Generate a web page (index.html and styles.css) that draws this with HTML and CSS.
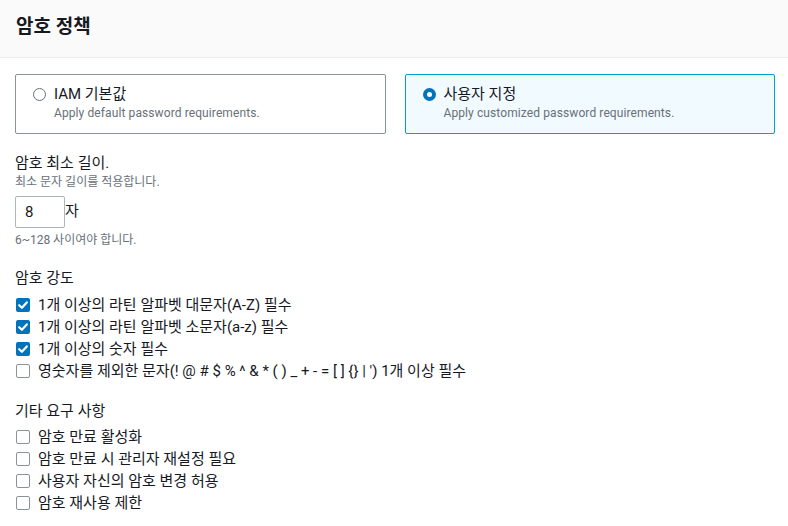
FILE: index.html
```html
<!DOCTYPE html>
<html lang="ko">
<head>
<meta charset="utf-8">
<link rel="stylesheet" href="styles.css">
</head>
<body>
<header class="header"><h2 class="title">암호 정책</h2></header>
<main class="content">
  <div class="tiles">
    <label class="tile">
      <span class="radio"></span>
      <span class="tile-text">
        <span class="tile-label">IAM 기본값</span>
        <span class="tile-desc">Apply default password requirements.</span>
      </span>
    </label>
    <label class="tile tile-selected">
      <span class="radio radio-on"></span>
      <span class="tile-text">
        <span class="tile-label">사용자 지정</span>
        <span class="tile-desc">Apply customized password requirements.</span>
      </span>
    </label>
  </div>

  <div class="field first-field">
    <div class="field-label">암호 최소 길이.</div>
    <div class="field-desc">최소 문자 길이를 적용합니다.</div>
    <div class="input-row"><span class="input">8</span><span class="unit">자</span></div>
    <div class="field-hint">6~128 사이여야 합니다.</div>
  </div>

  <div class="field strength">
    <div class="field-label">암호 강도</div>
    <ul class="checks">
      <li class="check"><span class="box box-on"><svg viewBox="0 0 14 14" width="14" height="14"><path d="M3.2 7.2 L5.9 9.8 L10.8 4.4" fill="none" stroke="#fff" stroke-width="2.2" stroke-linecap="round" stroke-linejoin="round"/></svg></span>1개 이상의 라틴 알파벳 대문자(A-Z) 필수</li>
      <li class="check"><span class="box box-on"><svg viewBox="0 0 14 14" width="14" height="14"><path d="M3.2 7.2 L5.9 9.8 L10.8 4.4" fill="none" stroke="#fff" stroke-width="2.2" stroke-linecap="round" stroke-linejoin="round"/></svg></span>1개 이상의 라틴 알파벳 소문자(a-z) 필수</li>
      <li class="check"><span class="box box-on"><svg viewBox="0 0 14 14" width="14" height="14"><path d="M3.2 7.2 L5.9 9.8 L10.8 4.4" fill="none" stroke="#fff" stroke-width="2.2" stroke-linecap="round" stroke-linejoin="round"/></svg></span>1개 이상의 숫자 필수</li>
      <li class="check"><span class="box"></span>영숫자를 제외한 문자(! @ # $ % ^ &amp; * ( ) _ + - = [ ] {} | ') 1개 이상 필수</li>
    </ul>
  </div>

  <div class="field other">
    <div class="field-label">기타 요구 사항</div>
    <ul class="checks checks-other">
      <li class="check"><span class="box"></span>암호 만료 활성화</li>
      <li class="check"><span class="box"></span>암호 만료 시 관리자 재설정 필요</li>
      <li class="check"><span class="box"></span>사용자 자신의 암호 변경 허용</li>
      <li class="check"><span class="box"></span>암호 재사용 제한</li>
    </ul>
  </div>
</main>
</body>
</html>
```

FILE: styles.css
```css
* { box-sizing: border-box; }
body {
  margin: 0;
  background: #fff;
  color: #16191f;
  font-family: Roboto, "Noto Sans CJK KR", sans-serif;
  font-size: 15px;
  line-height: 20px;
}
.header {
  height: 58px;
  background: #fafafa;
  border-bottom: 1px solid #eaeded;
  padding: 0 16px;
  display: flex;
  align-items: center;
}
.title {
  margin: 0 0 4px 0;
  font-size: 19px;
  line-height: 24px;
  font-weight: 700;
  color: #16191f;
}
.content {
  padding: 16px 13px 0 15px;
}
.tiles {
  display: grid;
  grid-template-columns: 1fr 1fr;
  gap: 19px;
}
.tile {
  display: flex;
  align-items: flex-start;
  gap: 8px;
  height: 60px;
  border: 1px solid #879596;
  border-radius: 2px;
  padding: 9px 16px 0 17px;
  background: #fff;
}
.tile-selected {
  border-color: #00a1c9;
  background: #f1faff;
}
.radio {
  flex: none;
  width: 13px;
  height: 13px;
  margin-top: 4px;
  border: 1px solid #687078;
  border-radius: 50%;
  background: #fff;
}
.radio-on {
  border: 4px solid #0073bb;
}
.tile-text {
  display: flex;
  flex-direction: column;
}
.tile-label {
  font-size: 15px;
  line-height: 20px;
}
.tile-desc {
  font-size: 12px;
  line-height: 18px;
  letter-spacing: 0.1px;
  color: #687078;
}
.field-label {
  font-size: 15px;
  line-height: 20px;
}
.field-desc, .field-hint {
  font-size: 12px;
  line-height: 18px;
  color: #687078;
}
.first-field {
  margin-top: 19px;
}
.input-row {
  display: flex;
  align-items: flex-start;
  margin-top: 5px;
}
.input {
  width: 50px;
  height: 32px;
  border: 1px solid #aab7b8;
  border-radius: 2px;
  padding: 5px 0 0 9px;
  font-size: 15px;
  line-height: 20px;
}
.unit {
  padding-top: 5px;
  font-size: 15px;
  line-height: 20px;
}
.field-hint {
  margin-top: 3px;
}
.strength {
  margin-top: 19px;
}
.other {
  margin-top: 19px;
}
.checks {
  list-style: none;
  margin: 6px 0 0 0;
  padding: 0;
}
.checks-other {
  margin-top: 5px;
}
.check {
  display: flex;
  align-items: center;
  height: 22px;
  gap: 8px;
  padding-left: 1px;
  font-size: 15px;
  line-height: 20px;
  color: #16191f;
  white-space: nowrap;
}
.box {
  flex: none;
  width: 14px;
  height: 14px;
  border: 1px solid #879596;
  border-radius: 2px;
  background: #fff;
  display: flex;
}
.box-on {
  border: none;
  background: #0073bb;
}
```
